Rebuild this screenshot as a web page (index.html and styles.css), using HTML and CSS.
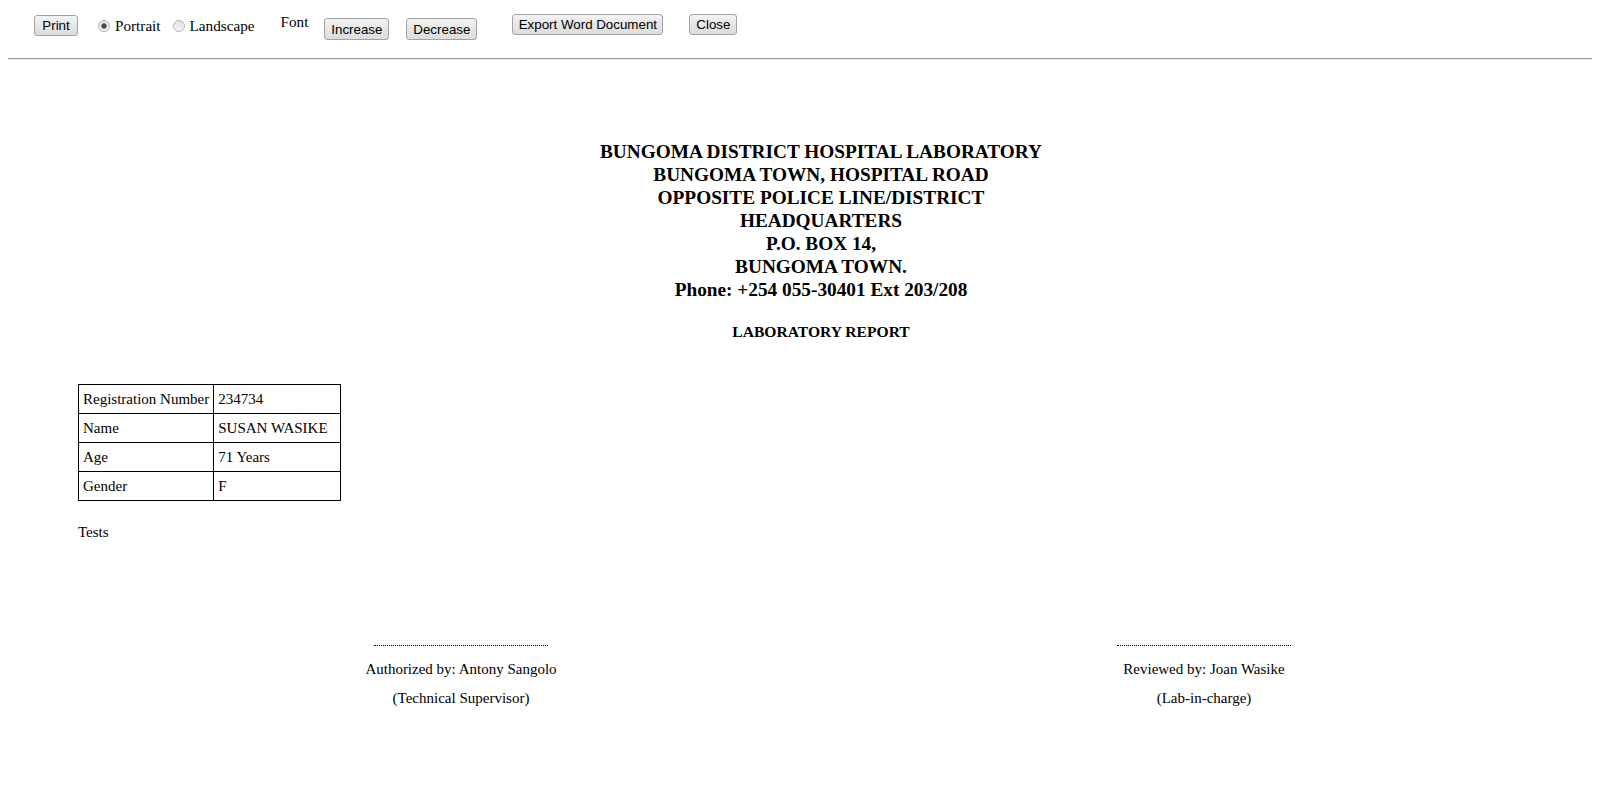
FILE: index.html
```html
<!DOCTYPE html>
<html>
<head>
<meta charset="utf-8">
<title>Laboratory Report</title>
<link rel="stylesheet" href="styles.css">
</head>
<body>
<div class="toolbar">
  <button class="btn btn-print">Print</button>
  <label class="opt opt-first"><input type="radio" name="orient" checked><span>Portrait</span></label>
  <label class="opt"><input type="radio" name="orient"><span>Landscape</span></label>
  <span class="font-label">Font</span>
  <button class="btn btn-inc">Increase</button>
  <button class="btn btn-dec">Decrease</button>
  <button class="btn btn-export">Export Word Document</button>
  <button class="btn btn-close">Close</button>
</div>
<hr class="divider">
<div class="report">
  <div class="letterhead">
    <div>BUNGOMA DISTRICT HOSPITAL LABORATORY</div>
    <div>BUNGOMA TOWN, HOSPITAL ROAD</div>
    <div>OPPOSITE POLICE LINE/DISTRICT</div>
    <div>HEADQUARTERS</div>
    <div>P.O. BOX 14,</div>
    <div>BUNGOMA TOWN.</div>
    <div>Phone: +254 055-30401 Ext 203/208</div>
  </div>
  <div class="report-title">LABORATORY REPORT</div>
  <table class="patient">
    <tr><td class="label-cell">Registration Number</td><td class="value-cell">234734</td></tr>
    <tr><td class="label-cell">Name</td><td class="value-cell">SUSAN WASIKE</td></tr>
    <tr><td class="label-cell">Age</td><td class="value-cell">71 Years</td></tr>
    <tr><td class="label-cell">Gender</td><td class="value-cell">F</td></tr>
  </table>
  <div class="tests">Tests</div>
  <div class="signatures">
    <div class="sig">
      <div class="sig-line"></div>
      <div class="sig-text">Authorized by: Antony Sangolo</div>
      <div class="sig-text">(Technical Supervisor)</div>
    </div>
    <div class="sig">
      <div class="sig-line"></div>
      <div class="sig-text">Reviewed by: Joan Wasike</div>
      <div class="sig-text">(Lab-in-charge)</div>
    </div>
  </div>
</div>
</body>
</html>
```
FILE: styles.css
```css
html, body {
  background: #ffffff;
}
body {
  margin: 8px;
  font-family: "Liberation Serif", "Times New Roman", serif;
  color: #000;
}

/* toolbar */
.toolbar {
  display: flex;
  align-items: flex-start;
  height: 42px;
  padding-left: 26px;
}
.btn {
  font-family: "Liberation Sans", Arial, sans-serif;
  font-size: 13.33px;
  color: #000;
  background: linear-gradient(#f4f4f4, #e6e6e6 50%, #dcdcdc);
  border: 1px solid #a3a3a3;
  border-radius: 3px;
  padding: 0;
  text-align: center;
  line-height: 17px;
}
.btn-print { width: 44px; height: 21px; margin-top: 7px; }
.btn-inc { width: 65px; height: 22px; margin-top: 10px; margin-left: 16px; }
.btn-dec { width: 71px; height: 22px; margin-top: 10px; margin-left: 17px; }
.btn-export { width: 151px; height: 21px; margin-top: 6px; margin-left: 35px; }
.btn-close { width: 48px; height: 21px; margin-top: 6px; margin-left: 26px; }

.opt {
  display: flex;
  align-items: center;
  margin-top: 9px;
  margin-left: 12px;
  font-size: 15.2px;
  line-height: 17px;
}
.opt-first { margin-left: 20px; }
.opt input {
  -webkit-appearance: none;
  appearance: none;
  width: 12px;
  height: 12px;
  margin: 0 5px 0 0;
  border: 1px solid #b4b4b4;
  border-radius: 50%;
  background: linear-gradient(#e4e4e4, #f6f6f6);
}
.opt input:checked {
  background: radial-gradient(circle, #4a4a4a 0 2px, #8a8a8a 2.6px, transparent 3.2px), linear-gradient(#e4e4e4, #f6f6f6);
}
.font-label {
  font-size: 15.2px;
  line-height: 17px;
  margin-top: 5px;
  margin-left: 26px;
}

.divider {
  margin: 8px 0;
  border: 0;
  border-top: 1px solid #9a9a9a;
  border-bottom: 1px solid #eeeeee;
  height: 0;
}

/* report */
.letterhead {
  margin-top: 80px;
  padding-left: 42px;
  text-align: center;
  font-weight: bold;
  font-size: 19.3px;
  line-height: 23px;
}
.report-title {
  margin-top: 21px;
  padding-left: 42px;
  text-align: center;
  font-weight: bold;
  font-size: 15.6px;
  line-height: 20px;
}
.patient {
  margin-top: 42px;
  margin-left: 70px;
  border-collapse: collapse;
  font-size: 15px;
}
.patient td {
  border: 1px solid #000;
  height: 28px;
  padding: 0 4px;
  vertical-align: middle;
  white-space: nowrap;
}
.patient .label-cell { width: 126px; }
.patient .value-cell { width: 118px; }
.tests {
  margin-top: 23px;
  margin-left: 70px;
  font-size: 15px;
  line-height: 17px;
}
.signatures {
  display: flex;
  margin-top: 104px;
  padding-left: 323px;
  gap: 483px;
}
.sig {
  width: 260px;
  display: flex;
  flex-direction: column;
  align-items: center;
  font-size: 15px;
}
.sig-line {
  width: 174px;
  border-top: 1px dotted #000;
  margin-bottom: 9px;
}
.sig-text {
  line-height: 29px;
}
```
